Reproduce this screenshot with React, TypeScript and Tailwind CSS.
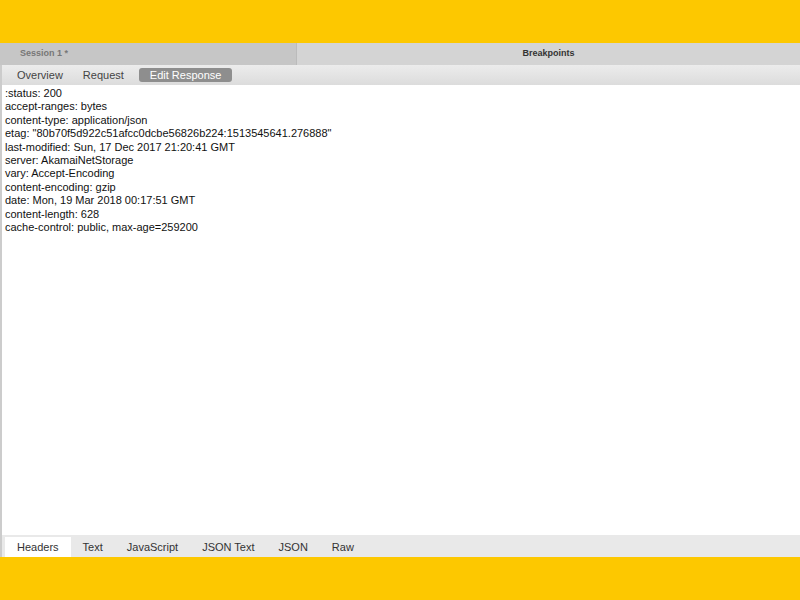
export default function App() {
  const lines = [
    ":status: 200",
    "accept-ranges: bytes",
    "content-type: application/json",
    'etag: "80b70f5d922c51afcc0dcbe56826b224:1513545641.276888"',
    "last-modified: Sun, 17 Dec 2017 21:20:41 GMT",
    "server: AkamaiNetStorage",
    "vary: Accept-Encoding",
    "content-encoding: gzip",
    "date: Mon, 19 Mar 2018 00:17:51 GMT",
    "content-length: 628",
    "cache-control: public, max-age=259200",
  ];
  const bottom = ["Text", "JavaScript", "JSON Text", "JSON", "Raw"];
  return (
    <div className="w-[800px] h-[600px] bg-[#fdc800] flex flex-col" style={{ fontFamily: "'Liberation Sans', Arial, sans-serif" }}>
      <div className="h-[43px]" />
      <div className="flex h-[22px] text-[9px] font-bold">
        <div className="w-[297px] bg-[#c6c6c6] text-[#777] pl-[20px] flex items-center border-r border-[#bbb]">Session 1 *</div>
        <div className="flex-1 bg-[#d4d4d4] text-[#333] flex items-center justify-center">Breakpoints</div>
      </div>
      <div className="h-[20px] bg-gradient-to-b from-[#ececec] to-[#dcdcdc] flex items-center pl-[5px] text-[11px] text-[#444] border-l-2 border-[#ccc]">
        <span className="px-[10px]">Overview</span>
        <span className="px-[10px]">Request</span>
        <span className="ml-[5px] px-[11px] bg-[#8e8e8e] text-white rounded-[3px] leading-[14px]">Edit Response</span>
      </div>
      <div className="flex-1 bg-white border-l-2 border-[#ccc] pl-[3px] pt-[2px] text-[11px] leading-[13.4px] text-[#111]">
        {lines.map((l) => (
          <div key={l}>{l}</div>
        ))}
      </div>
      <div className="h-[22px] bg-[#e9e9e9] flex items-end text-[11px] text-[#333] border-l-2 border-[#ccc] pl-[3px]">
        <span className="bg-white px-[12px] h-[20px] flex items-center">Headers</span>
        {bottom.map((b) => (
          <span key={b} className="px-[12px] h-[20px] flex items-center">{b}</span>
        ))}
      </div>
      <div className="h-[43px]" />
    </div>
  );
}
